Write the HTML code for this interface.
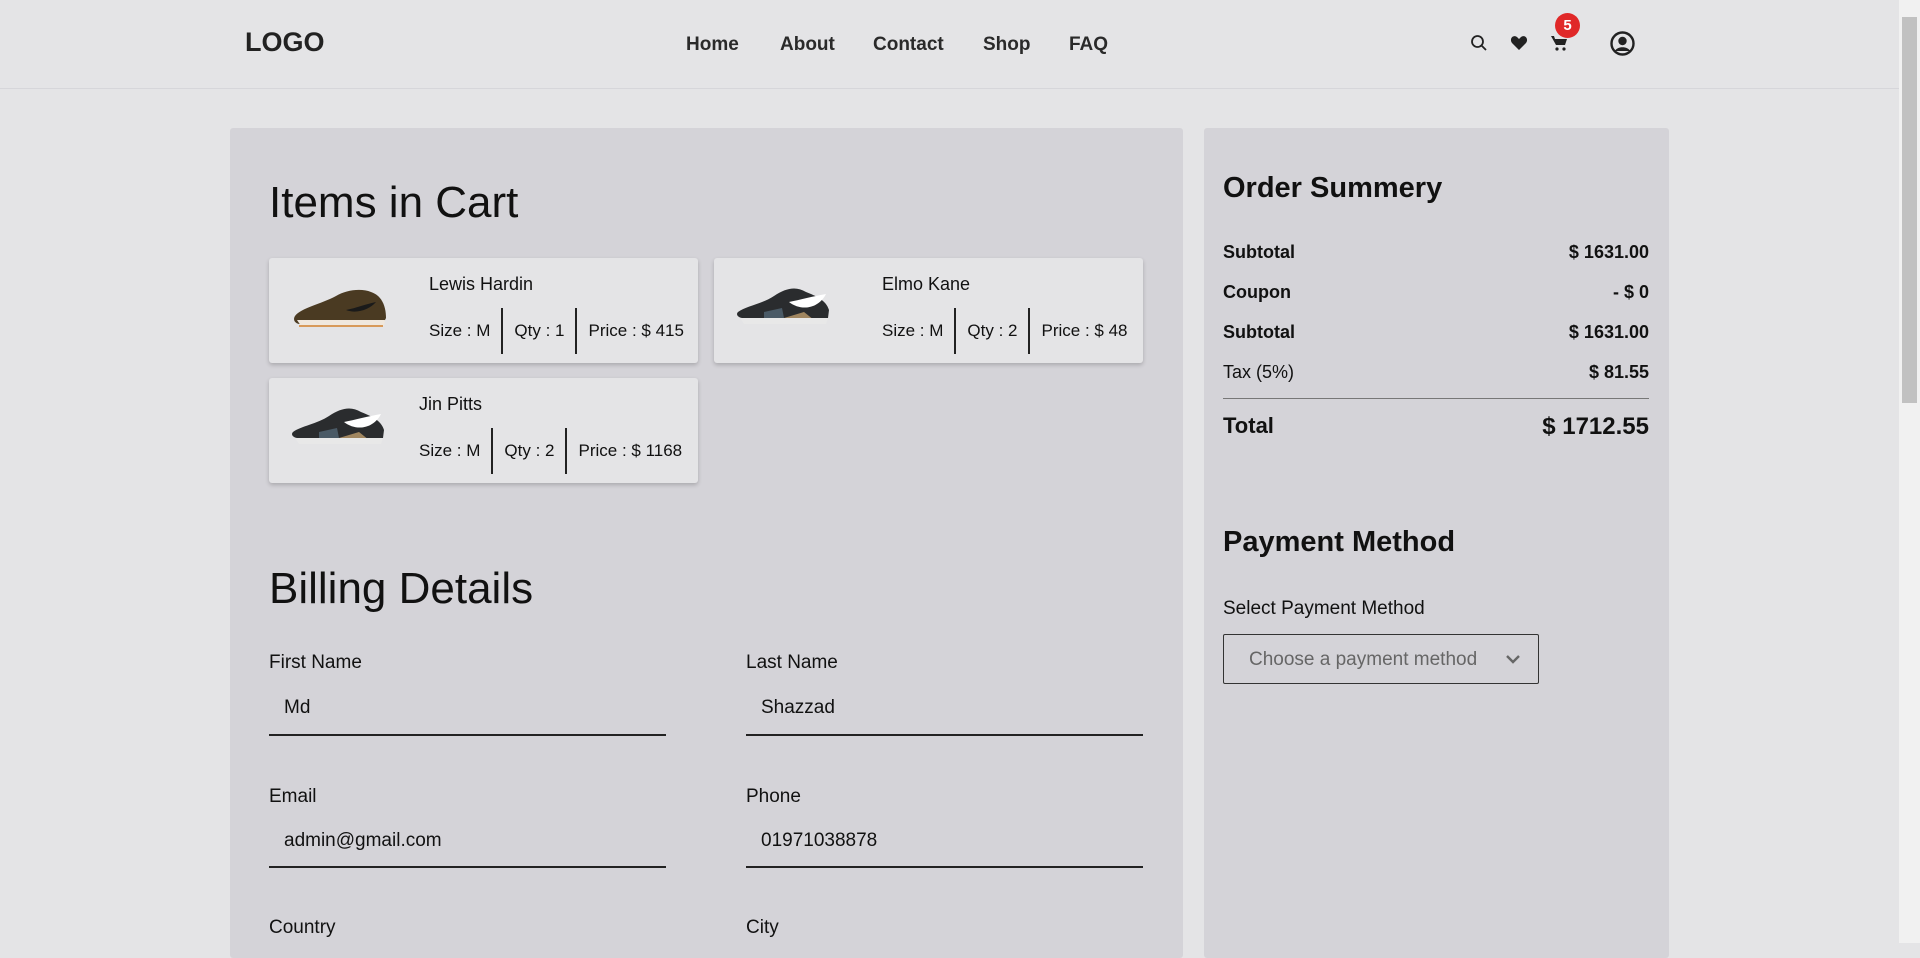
<!DOCTYPE html>
<html><head><meta charset="utf-8"><style>
*{margin:0;padding:0;box-sizing:border-box}
body{width:1920px;height:943px;overflow:hidden;background:#e4e4e6;font-family:"Liberation Sans",Arial,sans-serif;color:#111;position:relative}
.a{position:absolute;white-space:nowrap}
.hdr{position:absolute;left:0;top:0;width:1899px;height:89px;border-bottom:1px solid #d6d6da}
.nav{font-size:19px;font-weight:bold;color:#2a2a2a;top:34px}
.panel{position:absolute;background:#d4d3d8;border-radius:3px}
.card{position:absolute;background:#e4e4e6;border-radius:3px;box-shadow:0 2px 4px rgba(0,0,0,.2);width:429px;height:105px}
.card .nm{position:absolute;font-size:18px;top:16px}
.card .dt{position:absolute;top:50px;height:46px;display:flex;align-items:center;font-size:17px}
.card .dt span{padding:0 11px;height:46px;line-height:46px;border-right:2px solid #222}
.card .dt span:first-child{padding-left:0}
.card .dt span:last-child{border-right:none;padding-right:0}
.lbl{font-size:19px}
.val{font-size:19px}
.ul{position:absolute;height:2px;background:#222;width:397px}
.row{position:absolute;left:1223px;width:426px;display:flex;justify-content:space-between;font-size:18px;font-weight:bold}
</style></head><body>
<div class="hdr"></div>
<div class="a" style="left:245px;top:27px;font-size:27px;font-weight:bold;color:#222">LOGO</div>
<div class="a nav" style="left:686px">Home</div>
<div class="a nav" style="left:780px">About</div>
<div class="a nav" style="left:873px">Contact</div>
<div class="a nav" style="left:983px">Shop</div>
<div class="a nav" style="left:1069px">FAQ</div>
<svg class="a" style="left:1470px;top:34px" width="18" height="18" viewBox="0 0 18 18"><circle cx="7.5" cy="7.5" r="5.5" fill="none" stroke="#222" stroke-width="1.8"/><path d="M11.5 11.5L16 16" stroke="#222" stroke-width="1.8"/></svg>
<svg class="a" style="left:1510px;top:35px" width="18" height="16" viewBox="0 0 18 16"><path d="M9 15L2 8C-1 4 3-1 7 2L9 4 11 2C15-1 19 4 16 8Z" fill="#222"/></svg>
<svg class="a" style="left:1551px;top:35px" width="17" height="17" viewBox="0 0 17 17"><path d="M0 1H3L4 4H16L14 10H5Z" fill="#222"/><circle cx="6" cy="14" r="1.6" fill="#222"/><circle cx="13" cy="14" r="1.6" fill="#222"/></svg>
<div class="a" style="left:1555px;top:13px;width:25px;height:25px;border-radius:50%;background:#e02828;color:#fff;font-size:15px;font-weight:bold;text-align:center;line-height:25px">5</div>
<svg class="a" style="left:1610px;top:31px" width="25" height="25" viewBox="0 0 25 25"><circle cx="12.5" cy="12.5" r="11" fill="none" stroke="#222" stroke-width="2.4"/><circle cx="12.5" cy="10" r="4.2" fill="#222"/><path d="M5 20C7 15 18 15 20 20" fill="#222"/></svg>
<div class="a" style="left:1899px;top:0;width:21px;height:943px;background:#f1f1f1"></div>
<div class="a" style="left:1902px;top:17px;width:15px;height:386px;background:#c1c1c1"></div>

<div class="panel" style="left:230px;top:128px;width:953px;height:830px"></div>
<div class="panel" style="left:1204px;top:128px;width:465px;height:830px"></div>

<div class="a" style="left:269px;top:178px;font-size:44px;color:#111">Items in Cart</div>

<div class="card" style="left:269px;top:258px">
<svg style="position:absolute;left:22px;top:28px" width="100" height="45" viewBox="0 0 100 45"><path d="M4 30C10 22 30 18 45 10 55 4 70 2 80 6 92 10 95 22 95 32L92 38H8C3 37 2 33 4 30Z" fill="#4a3a22"/><path d="M6 34H94L93 40H10Z" fill="#f0e8de"/><path d="M8 40H92" stroke="#d89a5a" stroke-width="2"/><path d="M55 24C65 22 75 18 85 16 78 24 65 28 55 24Z" fill="#1a1a1a"/></svg>
<div class="nm" style="left:160px">Lewis Hardin</div>
<div class="dt" style="left:160px"><span>Size : M</span><span>Qty : 1</span><span>Price : $ 415</span></div>
</div>
<div class="card" style="left:714px;top:258px">
<svg style="position:absolute;left:20px;top:24px" width="100" height="50" viewBox="0 0 100 50"><path d="M4 30C12 24 28 22 40 14 52 6 62 4 72 10 82 14 92 18 95 28L94 36H8C3 35 2 32 4 30Z" fill="#2a2c2e"/><path d="M55 20C65 18 80 14 92 12 85 26 68 30 55 20Z" fill="#fff"/><path d="M50 36L70 30 80 38 60 42Z" fill="#a08660"/><path d="M6 36H94L92 42H10Z" fill="#e8e8e8"/><path d="M30 30L48 26 50 36H30Z" fill="#4a5a66"/></svg>
<div class="nm" style="left:168px">Elmo Kane</div>
<div class="dt" style="left:168px"><span>Size : M</span><span>Qty : 2</span><span>Price : $ 48</span></div>
</div>
<div class="card" style="left:269px;top:378px">
<svg style="position:absolute;left:20px;top:24px" width="100" height="50" viewBox="0 0 100 50"><path d="M4 30C12 24 28 22 40 14 52 6 62 4 72 10 82 14 92 18 95 28L94 36H8C3 35 2 32 4 30Z" fill="#2a2c2e"/><path d="M55 20C65 18 80 14 92 12 85 26 68 30 55 20Z" fill="#fff"/><path d="M50 36L70 30 80 38 60 42Z" fill="#a08660"/><path d="M6 36H94L92 42H10Z" fill="#e8e8e8"/><path d="M30 30L48 26 50 36H30Z" fill="#4a5a66"/></svg>
<div class="nm" style="left:150px">Jin Pitts</div>
<div class="dt" style="left:150px"><span>Size : M</span><span>Qty : 2</span><span>Price : $ 1168</span></div>
</div>

<div class="a" style="left:269px;top:564px;font-size:44px">Billing Details</div>
<div class="a lbl" style="left:269px;top:652px">First Name</div>
<div class="a lbl" style="left:746px;top:652px">Last Name</div>
<div class="a val" style="left:284px;top:697px">Md</div>
<div class="a val" style="left:761px;top:697px">Shazzad</div>
<div class="ul" style="left:269px;top:734px"></div>
<div class="ul" style="left:746px;top:734px"></div>
<div class="a lbl" style="left:269px;top:786px">Email</div>
<div class="a lbl" style="left:746px;top:786px">Phone</div>
<div class="a val" style="left:284px;top:830px">admin@gmail.com</div>
<div class="a val" style="left:761px;top:830px">01971038878</div>
<div class="ul" style="left:269px;top:866px"></div>
<div class="ul" style="left:746px;top:866px"></div>
<div class="a lbl" style="left:269px;top:917px">Country</div>
<div class="a lbl" style="left:746px;top:917px">City</div>

<div class="a" style="left:1223px;top:172px;font-size:29px;font-weight:bold">Order Summery</div>
<div class="row" style="top:242px"><span>Subtotal</span><span>$ 1631.00</span></div>
<div class="row" style="top:282px"><span>Coupon</span><span>- $ 0</span></div>
<div class="row" style="top:322px"><span>Subtotal</span><span>$ 1631.00</span></div>
<div class="row" style="top:362px"><span style="font-weight:normal">Tax (5%)</span><span>$ 81.55</span></div>
<div class="a" style="left:1223px;top:398px;width:426px;height:1px;background:#777"></div>
<div class="row" style="top:413px;font-size:22px"><span>Total</span><span style="font-size:24px">$ 1712.55</span></div>
<div class="a" style="left:1223px;top:526px;font-size:29px;font-weight:bold">Payment Method</div>
<div class="a" style="left:1223px;top:598px;font-size:19px">Select Payment Method</div>
<div class="a" style="left:1223px;top:634px;width:316px;height:50px;border:1.5px solid #333;border-radius:2px"></div>
<div class="a" style="left:1249px;top:649px;font-size:19px;color:#666">Choose a payment method</div>
<svg class="a" style="left:1506px;top:655px" width="14" height="9" viewBox="0 0 14 9"><path d="M1 1L7 7 13 1" fill="none" stroke="#666" stroke-width="2.4"/></svg>
</body></html>
